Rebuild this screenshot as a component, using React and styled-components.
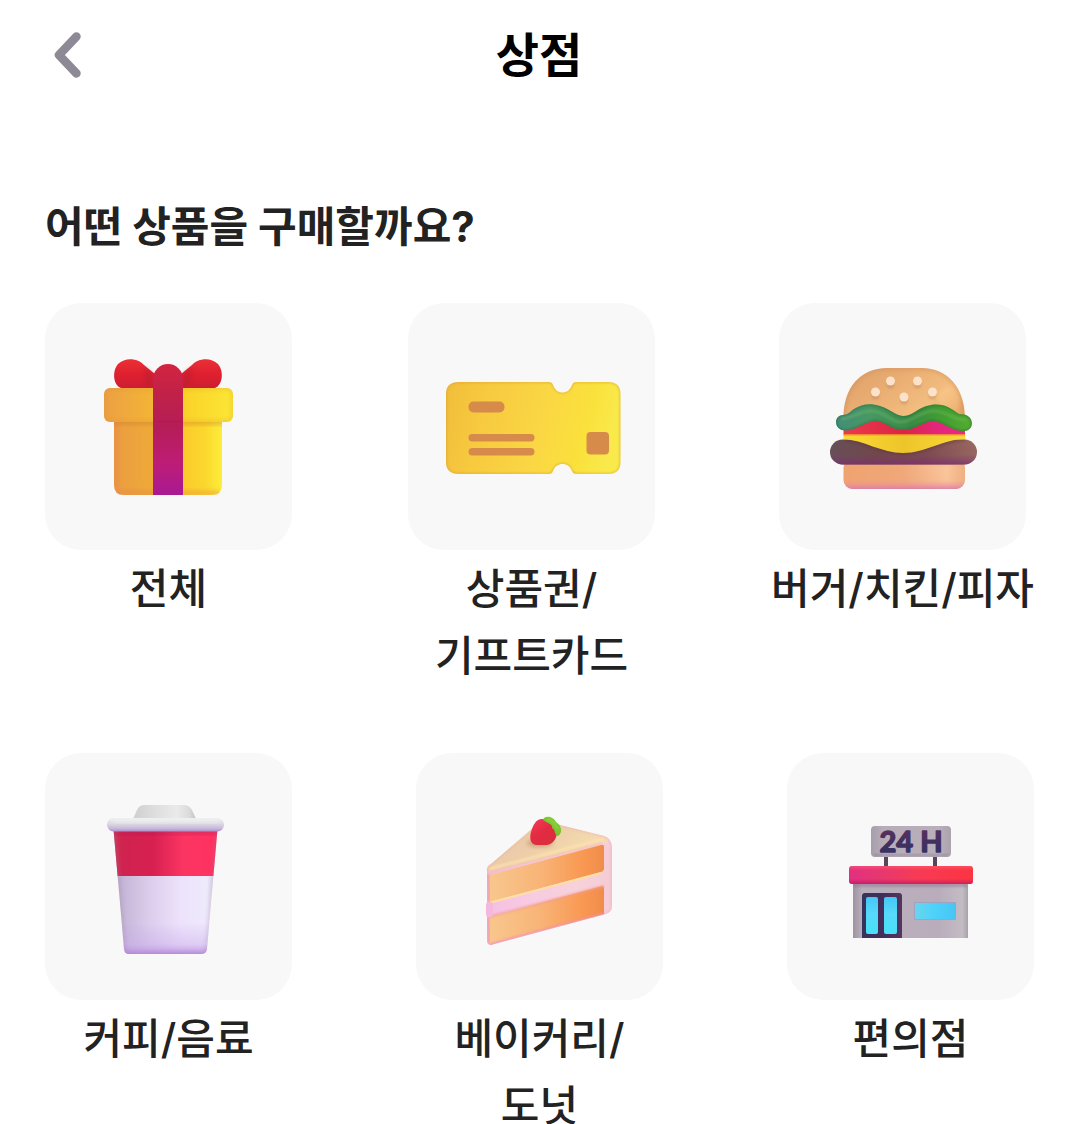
import React from "react";
import styled, { createGlobalStyle } from "styled-components";

const GlobalStyle = createGlobalStyle`
  * { box-sizing: border-box; }
  body {
    margin: 0;
    background: #fff;
    font-family: Inter, "Noto Sans CJK KR", "Noto Sans", sans-serif;
    color: #222;
  }
`;

const Screen = styled.div`
  min-height: 100vh;
  background: #fff;
`;

const Header = styled.header`
  display: grid;
  grid-template-columns: 60px 1fr 60px;
  align-items: center;
  height: 110px;
  padding: 0 38px;
`;

const BackButton = styled.button`
  display: flex;
  align-items: center;
  justify-content: center;
  width: 60px;
  height: 60px;
  padding: 0;
  border: 0;
  background: none;
  cursor: pointer;
`;

const Title = styled.h1`
  margin: 0;
  text-align: center;
  font-size: 47px;
  line-height: 68px;
  font-weight: 700;
  color: #000;
`;

const Content = styled.main`
  padding: 84px 44px 0 45px;
`;

const Question = styled.h2`
  margin: 0 0 43px;
  font-size: 42px;
  line-height: 66px;
  font-weight: 700;
`;

const Rows = styled.div`
  display: flex;
  flex-direction: column;
  gap: 64px;
`;

const Row = styled.div`
  display: flex;
  justify-content: space-between;
  align-items: flex-start;
`;

const Category = styled.a`
  display: flex;
  flex-direction: column;
  align-items: center;
  gap: 5px;
  color: inherit;
  text-decoration: none;
`;

const Tile = styled.span`
  display: block;
  width: 247px;
  height: 247px;
  border-radius: 36px;
  background: #f8f8f8;

  svg { display: block; width: 100%; height: 100%; }
`;

const Label = styled.span`
  text-align: center;
  white-space: pre-line;
  word-break: keep-all;
  font-size: 42px;
  line-height: 67px;
  font-weight: 500;
`;

function Gradient({ id, stops, vertical, x1 = 0, y1 = 0, x2, y2 }) {
  return (
    <linearGradient id={id} x1={x1} y1={y1} x2={x2 ?? (vertical ? 0 : 1)} y2={y2 ?? (vertical ? 1 : 0)}>
      {stops.map(([offset, color, opacity]) => (
        <stop key={offset} offset={offset} stopColor={color} stopOpacity={opacity ?? 1} />
      ))}
    </linearGradient>
  );
}

function Blur({ id, amount }) {
  return (
    <filter id={id} x="-30%" y="-30%" width="160%" height="160%">
      <feGaussianBlur stdDeviation={amount} />
    </filter>
  );
}

function GiftIcon() {
  const body = "M69 112H177V182Q177 192 167 192H79Q69 192 69 182Z";
  return (
    <svg viewBox="0 0 247 247" aria-hidden="true">
      <defs>
        <Gradient id="giftBody" stops={[[0, "#eb9c42"], [0.35, "#eeaa38"], [0.65, "#fbcb2b"], [0.85, "#fbd82e"], [1, "#fcee39"]]} />
        <Gradient id="giftLid" stops={[[0, "#eca044"], [0.35, "#f2b336"], [0.65, "#fad329"], [1, "#fbe735"]]} />
        <Gradient id="giftRibbon" vertical stops={[[0, "#d32440"], [0.25, "#bf2149"], [0.48, "#b51d57"], [0.75, "#be1d75"], [1, "#a91994"]]} />
        <Gradient id="giftBow" vertical stops={[[0, "#ea3035"], [0.5, "#e0202f"], [1, "#cc1d32"]]} />
        <Blur id="giftBlur" amount="2" />
        <clipPath id="giftBodyClip"><path d={body} /></clipPath>
        <clipPath id="giftLidClip"><rect x="59" y="85" width="129" height="34" rx="6" /></clipPath>
      </defs>
      <path d={body} fill="url(#giftBody)" />
      <g clipPath="url(#giftBodyClip)">
        <rect x="66" y="116" width="114" height="6" fill="#c77a25" opacity=".4" filter="url(#giftBlur)" />
        <path d="M71 118V190H175" stroke="#e5824b" strokeWidth="4" fill="none" opacity=".5" filter="url(#giftBlur)" />
      </g>
      <path d="M110 85H76C68 82 67 68 73 61C80 54 93 55 99 62L110 71Z" fill="url(#giftBow)" />
      <path d="M136 85H170C178 82 179 68 173 61C166 54 153 55 147 62L136 71Z" fill="url(#giftBow)" />
      <path d="M99 64L108 71V83H101Z M147 64L138 71V83H145Z" fill="#a51a32" opacity=".35" filter="url(#giftBlur)" />
      <rect x="59" y="85" width="129" height="34" rx="6" fill="url(#giftLid)" />
      <g clipPath="url(#giftLidClip)">
        <rect x="59" y="85" width="129" height="34" rx="6" fill="none" stroke="#d78a35" strokeWidth="2" opacity=".5" filter="url(#giftBlur)" />
      </g>
      <path d="M108 192V76A15 15 0 0 1 138 76V192Z" fill="url(#giftRibbon)" />
      <path d="M108 118.500H138" stroke="#8f1748" opacity=".25" />
    </svg>
  );
}

function TicketIcon() {
  const shape = "M51 79H141Q144 79 145 82C147 87 150 89.500 154.500 89.500S162 87 164 82Q165 79 168 79H200Q212.500 79 212.500 91V159Q212.500 171 200 171H168Q165 171 164 168C162 163 159 161 154.500 161S147 163 145 168Q144 171 141 171H51Q38 171 38 159V91Q38 79 51 79Z";
  return (
    <svg viewBox="0 0 247 247" aria-hidden="true">
      <defs>
        <Gradient id="ticketFill" y2={0.12} stops={[[0, "#f1bd3b"], [0.25, "#f7ca3f"], [0.6, "#fad744"], [0.85, "#fae13b"], [1, "#f9e94b"]]} />
        <Blur id="ticketBlur" amount="1" />
        <clipPath id="ticketClip"><path d={shape} /></clipPath>
      </defs>
      <path d={shape} fill="url(#ticketFill)" />
      <g clipPath="url(#ticketClip)">
        <path d={shape} fill="none" stroke="#d59a35" strokeWidth="1.500" opacity=".7" filter="url(#ticketBlur)" />
      </g>
      <g fill="#d68b4a">
        <rect x="60.500" y="98.500" width="36" height="11" rx="5" />
        <rect x="60.500" y="131" width="66" height="7.500" rx="3.700" />
        <rect x="60.500" y="145" width="66" height="7.500" rx="3.700" />
        <rect x="178.500" y="129" width="22.500" height="22.500" rx="4" />
      </g>
    </svg>
  );
}

function BurgerIcon() {
  const topBun = "M64.500 116C64 84 82 65 108 65H143C168 65 186 84 186 116V120H64.500Z";
  const lettuce = "M64 112C68 112 71 109 75 106C83 101 91 100 101 103C113 107 117 113 125 113C134 113 139 104 152 102C166 100 172 106 180 111C188 111 193 114 193 121C192 129 184 129 177 127C169 125 161 117 152 118C143 120 135 127 124 127C111 127 105 117 95 118C85 120 80 125 71 127C62 129 57 125 57 119C57 115 60 112 64 112Z";
  return (
    <svg viewBox="0 0 247 247" aria-hidden="true">
      <defs>
        <Gradient id="bunTop" y2={0.6} stops={[[0, "#dda06a"], [0.4, "#e9ad72"], [0.8, "#f3be80"], [1, "#e6a568"]]} />
        <Gradient id="lettuce" stops={[[0, "#438e78"], [0.25, "#479863"], [0.55, "#3a8a45"], [0.8, "#42a02f"], [1, "#55ad2f"]]} />
        <Gradient id="tomato" stops={[[0, "#eb3a4c"], [0.5, "#dc2344"], [0.75, "#e32678"], [1, "#eb2888"]]} />
        <Gradient id="cheese" stops={[[0, "#fcd933"], [0.5, "#edc52b"], [1, "#fbd938"]]} />
        <Gradient id="patty" stops={[[0, "#655057"], [0.3, "#704849"], [0.65, "#7d4b4e"], [1, "#9b6a61"]]} />
        <Gradient id="pattyShade" vertical stops={[[0, "#7b3d67", 0], [0.6, "#7b3d67", 0.1], [1, "#7b2a76", 0.7]]} />
        <Gradient id="bunBottom" stops={[[0, "#efa36e"], [0.5, "#efa879"], [0.85, "#fac69a"], [1, "#eeb080"]]} />
        <Gradient id="bunBottomShade" vertical stops={[[0, "#e48868", 0.5], [0.3, "#f7b183", 0], [0.7, "#f59991", 0.1], [1, "#d879ad", 0.85]]} />
        <Blur id="burgerBlur" amount="2" />
        <Blur id="seedBlur" amount="1" />
        <clipPath id="bunClip"><path d={topBun} /></clipPath>
        <clipPath id="lettuceClip"><path d={lettuce} /></clipPath>
      </defs>
      <path d={topBun} fill="url(#bunTop)" />
      <g clipPath="url(#bunClip)">
        <path d={topBun} fill="none" stroke="#ce8556" strokeWidth="3" opacity=".55" filter="url(#burgerBlur)" />
        <ellipse cx="170" cy="98" rx="11" ry="14" fill="#ffd091" opacity=".4" filter="url(#burgerBlur)" />
      </g>
      <g fill="#a86f50" opacity=".3" filter="url(#seedBlur)">
        <circle cx="111.500" cy="81.500" r="4" /><circle cx="138.500" cy="81.500" r="4" />
        <circle cx="96.500" cy="92.500" r="4" /><circle cx="125" cy="97.500" r="4" /><circle cx="153.500" cy="92.500" r="4" />
      </g>
      <g fill="#fce2ca">
        <circle cx="111.500" cy="78" r="4.500" /><circle cx="138.500" cy="78" r="4.500" />
        <circle cx="96.500" cy="89" r="4.500" /><circle cx="125" cy="94" r="4.500" /><circle cx="153.500" cy="89" r="4.500" />
      </g>
      <path d="M64.500 118H186V132H64.500Z" fill="url(#tomato)" />
      <path d={lettuce} fill="url(#lettuce)" />
      <g clipPath="url(#lettuceClip)">
        <path d={lettuce} fill="none" stroke="#245e38" strokeWidth="2" opacity=".5" filter="url(#seedBlur)" />
        <path d="M62 116C77 114 82 107 94 108C109 110 112 120 123 119C136 117 143 107 156 108C170 109 175 118 188 117" fill="none" stroke="#7ebf73" strokeWidth="3" opacity=".35" filter="url(#seedBlur)" />
      </g>
      <rect x="64.500" y="156" width="121.500" height="30" rx="9" fill="url(#bunBottom)" />
      <rect x="64.500" y="156" width="121.500" height="30" rx="9" fill="url(#bunBottomShade)" />
      <rect x="51" y="136.500" width="147" height="25" rx="12.500" fill="url(#patty)" />
      <rect x="51" y="136.500" width="147" height="25" rx="12.500" fill="url(#pattyShade)" />
      <path d="M66 137C83 137 102 151 124 151S165 137 186 137" fill="none" stroke="#4f2d42" strokeWidth="2" opacity=".4" filter="url(#seedBlur)" />
      <path d="M64.500 131.500H186V136C164 136 147 150 124 150C103 150 84 137 64.500 136Z" fill="url(#cheese)" />
      <path d="M64.500 132H186" stroke="#f39125" strokeWidth="1" />
    </svg>
  );
}

function CupIcon() {
  const cup = "M68.500 76H172.500L162 196Q161.500 201 156 201H84Q79.500 201 79 196Z";
  return (
    <svg viewBox="0 0 247 247" aria-hidden="true">
      <defs>
        <Gradient id="cupBase" stops={[[0, "#b8abc8"], [0.13, "#c9badb"], [0.35, "#dccdec"], [0.65, "#ede3fc"], [0.9, "#eeeafb"], [1, "#d9d3df"]]} />
        <Gradient id="cupBottom" vertical stops={[[0, "#c29be9", 0], [0.75, "#c29be9", 0], [0.92, "#c6a7e9", 0.4], [1, "#b98ae0", 0.9]]} />
        <Gradient id="sleeve" stops={[[0, "#d23c56"], [0.15, "#d0234f"], [0.4, "#d72051"], [0.65, "#fb3562"], [0.92, "#ff315f"], [1, "#f9595e"]]} />
        <Gradient id="rim" vertical stops={[[0, "#f0f0f0"], [0.4, "#dddbe3"], [0.75, "#c9bbdc"], [1, "#aa91cd"]]} />
        <Gradient id="lidTop" stops={[[0, "#cfcfcf"], [0.35, "#dedede"], [0.7, "#eaeaea"], [0.9, "#dadada"], [1, "#c1c1c1"]]} />
        <Blur id="cupBlur" amount="2" />
        <clipPath id="cupClip"><path d={cup} /></clipPath>
      </defs>
      <path d={cup} fill="url(#cupBase)" />
      <path d={cup} fill="url(#cupBottom)" />
      <g clipPath="url(#cupClip)">
        <rect x="60" y="77" width="120" height="46" fill="url(#sleeve)" />
        <rect x="64" y="77" width="113" height="4" fill="#a60e55" opacity=".35" filter="url(#cupBlur)" />
        <path d={cup} fill="none" stroke="#9b78a4" strokeWidth="2" opacity=".5" filter="url(#cupBlur)" />
      </g>
      <path d="M88 66L92 57Q94 52 100 52H139Q144 52 147 57L151 66Z" fill="url(#lidTop)" />
      <rect x="62" y="65" width="117" height="13.500" rx="6.500" fill="url(#rim)" />
      <rect x="68" y="67" width="106" height="3" rx="1" fill="#fff" opacity=".4" filter="url(#cupBlur)" />
    </svg>
  );
}

function CakeIcon() {
  const slice = "M71 118Q70 114 75 111L128 67Q138 70 144 72L188 83Q196 86 196 94V153Q196 159 190 161L78 191Q71 194 71 187Z";
  return (
    <svg viewBox="0 0 247 247" aria-hidden="true">
      <defs>
        <Gradient id="cakeTop" y2={0.5} stops={[[0, "#ebcaa0"], [0.5, "#edcdaa"], [0.8, "#f2d9ad"], [1, "#f9d8c2"]]} />
        <Gradient id="cream" stops={[[0, "#f5bfe2"], [0.35, "#f8cbe2"], [0.75, "#f6d2d8"], [1, "#f5cbd6"]]} />
        <Gradient id="sponge" stops={[[0, "#f8c78e"], [0.45, "#f8b477"], [0.8, "#f99954"], [1, "#f08c4a"]]} />
        <Gradient id="berry" x1={0.1} x2={0.8} y2={1} stops={[[0, "#f03a54"], [0.5, "#e42a43"], [1, "#d6303b"]]} />
        <Blur id="cakeBlur" amount="1" />
        <Blur id="cakeShadow" amount="2" />
        <clipPath id="cakeClip"><path d={slice} /></clipPath>
      </defs>
      <path d={slice} fill="url(#cream)" />
      <path d="M71 118Q70 114 75 111L126 67Q138 69 144 72L188 83Q195 85 191 90L75 119Q72 120 71 118Z" fill="url(#cakeTop)" />
      <g clipPath="url(#cakeClip)">
        <path d="M73 120L186 90" fill="none" stroke="#f5b6c4" strokeWidth="2" opacity=".7" filter="url(#cakeBlur)" />
        <path d="M73 116L188 86" fill="none" stroke="#ffe4ad" strokeWidth="3" opacity=".7" filter="url(#cakeBlur)" />
        <path d={slice} fill="none" stroke="#eaa9b8" strokeWidth="1.500" opacity=".6" filter="url(#cakeBlur)" />
      </g>
      <path d="M73 122L185 92Q188 91 188 94V115Q188 118 185 119L73 149Z" fill="url(#sponge)" />
      <path d="M73 164L186 133Q188 133 188 135V161L77 190Q73 191 73 187Z" fill="url(#sponge)" />
      <path d="M73 150L185 120" stroke="#ffe0a4" strokeWidth="2" />
      <path d="M72 164L188 133" stroke="#f69c94" strokeWidth="2" opacity=".8" filter="url(#cakeBlur)" />
      <g clipPath="url(#cakeClip)">
        <path d="M74 192L188 161" stroke="#f391a5" strokeWidth="3" opacity=".8" filter="url(#cakeBlur)" />
        <path d="M72 121L73 149M72 165L73 190" stroke="#ee9992" strokeWidth="3" opacity=".7" filter="url(#cakeBlur)" />
      </g>
      <rect x="70" y="149" width="7" height="15" rx="3" fill="#f5b8dc" />
      <ellipse cx="124" cy="90" rx="13" ry="4" fill="#a77750" opacity=".5" filter="url(#cakeShadow)" />
      <path d="M126 66C120 66 117 72 115 79C113 86 115 92 121 92H130C136 92 141 86 141 79C141 71 133 66 126 66Z" fill="url(#berry)" />
      <path d="M127 67C128 63 136 62 140 69C146 73 147 80 142 83C138 82 140 77 136 75C137 71 131 70 127 67Z" fill="#79c52f" />
      <path d="M131 66C136 67 140 71 142 77" fill="none" stroke="#9ee14d" strokeWidth="2" opacity=".6" filter="url(#cakeBlur)" />
    </svg>
  );
}

function StoreIcon() {
  return (
    <svg viewBox="0 0 247 247" aria-hidden="true">
      <defs>
        <Gradient id="wall" stops={[[0, "#9f92a2"], [0.08, "#b9afbb"], [0.75, "#b9adbb"], [0.95, "#c3bcc4"], [1, "#a8a1a9"]]} />
        <Gradient id="roof" stops={[[0, "#e2307f"], [0.25, "#e73770"], [0.55, "#f73b55"], [1, "#fc3442"]]} />
        <Gradient id="roofShade" vertical stops={[[0, "#ff6576", 0.5], [0.25, "#ff6576", 0], [0.7, "#c51b63", 0], [1, "#b91464", 0.7]]} />
        <Gradient id="board" stops={[[0, "#a89dab"], [0.15, "#b7adb9"], [0.85, "#b9afbb"], [1, "#aaa2ac"]]} />
        <Gradient id="digits" vertical stops={[[0, "#623060"], [0.55, "#43305f"], [1, "#303268"]]} />
        <Gradient id="doorFrame" stops={[[0, "#36345a"], [0.5, "#432d5a"], [1, "#56345d"]]} />
        <Gradient id="glass" vertical stops={[[0, "#43c8f5"], [0.45, "#57d9fc"], [1, "#46e1f8"]]} />
        <Gradient id="windowGlass" stops={[[0, "#69d5ee"], [0.5, "#4cd2fa"], [1, "#48c5f5"]]} />
        <Blur id="storeBlur" amount="1" />
      </defs>
      <path d="M97 102H101V116H97Z M146 102H150V116H146Z" fill="#594759" />
      <rect x="84" y="73" width="80" height="31" rx="4" fill="url(#board)" />
      <rect x="87" y="101" width="74" height="2" fill="#7b697f" opacity=".4" filter="url(#storeBlur)" />
      <text x="124" y="99" textAnchor="middle" fontFamily="Lato, sans-serif" fontWeight="700" fontSize="29" fill="url(#digits)" stroke="url(#digits)" strokeWidth="1.500" strokeLinejoin="round">24 H</text>
      <rect x="66" y="128" width="115" height="57" fill="url(#wall)" />
      <rect x="67" y="130" width="113" height="4" fill="#83657f" opacity=".4" filter="url(#storeBlur)" />
      <rect x="62" y="113" width="124" height="18" rx="3" fill="url(#roof)" />
      <rect x="62" y="113" width="124" height="18" rx="3" fill="url(#roofShade)" />
      <path d="M75 185V143Q75 140 78 140H112Q115 140 115 143V185Z" fill="url(#doorFrame)" />
      <rect x="79" y="144" width="12" height="37" rx="2" fill="url(#glass)" />
      <rect x="97" y="144" width="13" height="37" rx="2" fill="url(#glass)" />
      <rect x="127" y="149" width="42" height="18" rx="1" fill="#9fa3c0" />
      <rect x="128" y="150" width="40" height="16" rx="1" fill="url(#windowGlass)" />
    </svg>
  );
}

const categoryRows = [
  [
    { id: "all", label: "전체", Icon: GiftIcon },
    { id: "voucher", label: "상품권/\n기프트카드", Icon: TicketIcon },
    { id: "burger", label: "버거/치킨/피자", Icon: BurgerIcon },
  ],
  [
    { id: "coffee", label: "커피/음료", Icon: CupIcon },
    { id: "bakery", label: "베이커리/\n도넛", Icon: CakeIcon },
    { id: "store", label: "편의점", Icon: StoreIcon },
  ],
];

export default function App() {
  return (
    <Screen>
      <GlobalStyle />
      <Header>
        <BackButton type="button" aria-label="뒤로">
          <svg width="30" height="48" viewBox="0 0 30 48" fill="none" aria-hidden="true">
            <path d="M23.500 5.500L6 24L23.500 42.500" stroke="#8e8a95" strokeWidth="8.500" strokeLinecap="round" strokeLinejoin="round" />
          </svg>
        </BackButton>
        <Title>상점</Title>
      </Header>
      <Content>
        <Question>어떤 상품을 구매할까요?</Question>
        <Rows>
          {categoryRows.map((row) => (
            <Row key={row[0].id}>
              {row.map(({ id, label, Icon }) => (
                <Category key={id} href={`#${id}`}>
                  <Tile><Icon /></Tile>
                  <Label>{label}</Label>
                </Category>
              ))}
            </Row>
          ))}
        </Rows>
      </Content>
    </Screen>
  );
}
